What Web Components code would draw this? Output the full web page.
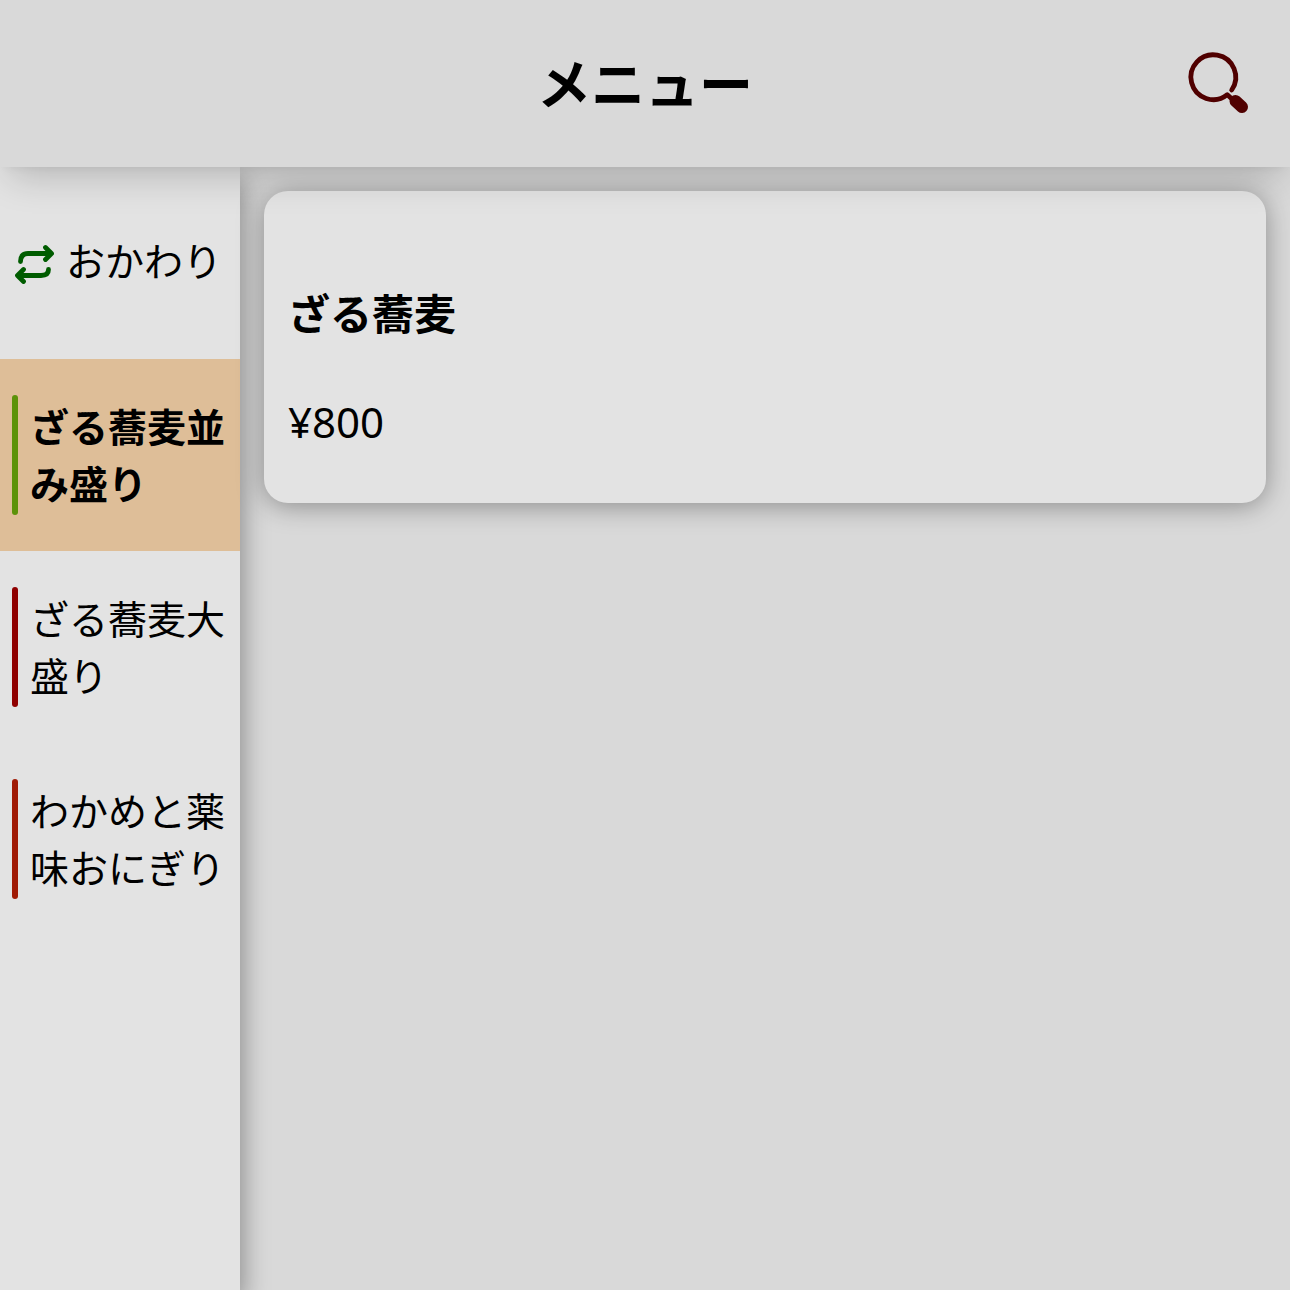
<!DOCTYPE html>
<html lang="ja">
<head>
<meta charset="utf-8">
<meta name="viewport" content="width=device-width, initial-scale=1">
<title>メニュー</title>
<style>
  html, body { height: 100%; margin: 0; }
  body {
    font-family: "Noto Sans", "Noto Sans CJK JP", sans-serif;
    color: #000;
    background: #d9d9d9;
  }
</style>
</head>
<body>
<menu-page>
  <menu-header slot="header">メニュー</menu-header>

  <menu-repeat slot="nav">おかわり</menu-repeat>
  <menu-item slot="nav" selected style="--bar:#5c920a">ざる蕎麦並み盛り</menu-item>
  <menu-item slot="nav" style="--bar:#8f0000">ざる蕎麦大盛り</menu-item>
  <menu-item slot="nav" style="--bar:#a01a05">わかめと薬味おにぎり</menu-item>

  <menu-card price="¥800">ざる蕎麦</menu-card>
</menu-page>

<script>
(function () {
  /* shadow root を作る共通処理 */
  function define(name, html) {
    customElements.define(name, class extends HTMLElement {
      connectedCallback() {
        if (this.shadowRoot) return;
        this.attachShadow({ mode: 'open' }).innerHTML = html(this);
      }
    });
  }

  /* ── ページの枠: 上にヘッダー、左にナビ、右に商品一覧 ── */
  define('menu-page', () => `
    <style>
      :host { display: flex; flex-direction: column; min-height: 100%; overflow: hidden; }
      .body { flex: 1; display: flex; }
      nav {
        flex: none;
        width: 240px;
        background: #e3e3e3;
        box-shadow: 3px 12px 24px rgba(0,0,0,.36);
      }
      main { flex: 1; min-width: 0; padding: 24px; }
    </style>
    <slot name="header"></slot>
    <div class="body">
      <nav aria-label="メニュー"><slot name="nav"></slot></nav>
      <main><slot></slot></main>
    </div>`);

  /* ── ヘッダー: 左右同幅の列でタイトルを中央に置く ── */
  define('menu-header', () => `
    <style>
      :host {
        position: relative;   /* 影を下の列より手前に出す */
        z-index: 2;
        display: grid;
        grid-template-columns: 1fr auto 1fr;
        align-items: center;
        height: 167px;
        padding: 0 36px;
        background: #d9d9d9;
        box-shadow: 0 18px 36px -9px rgba(0,0,0,.2), 0 6px 9px -6px rgba(0,0,0,.06);
      }
      h1 { grid-column: 2; margin: 0; font-size: 54px; line-height: 78px; font-weight: 700; }
      button {
        justify-self: end;
        display: block;
        padding: 0;
        border: 0;
        background: none;
        color: #500000;
      }
      svg { display: block; width: 72px; height: 72px; }
    </style>
    <h1><slot></slot></h1>
    <button type="button" aria-label="検索">
      <svg viewBox="0 0 72 72" fill="none" stroke="currentColor" stroke-linecap="round" stroke-linejoin="round">
        <path stroke-width="4.8" d="M49.7 42A22.4 22.4 0 1 0 45.3 46.7L50 51"/>
        <path stroke-width="12" d="M53.5 53L60 59"/>
      </svg>
    </button>`);

  /* ── ナビ: おかわり ── */
  define('menu-repeat', () => `
    <style>
      :host { display: block; }
      button {
        display: flex;
        align-items: center;
        gap: 12px;
        width: 100%;
        height: 192px;
        padding: 0 12px;
        border: 0;
        background: none;
        color: inherit;
        font: inherit;
        font-size: 39px;
        line-height: 57px;
        white-space: nowrap;
      }
      svg { flex: none; width: 42px; height: 42px; color: #005c00; }
      span { padding-bottom: 6px; }
    </style>
    <button type="button">
      <svg viewBox="0 0 42 42" fill="none" stroke="currentColor" stroke-width="4.8" stroke-linecap="round" stroke-linejoin="round">
        <path d="M8.5 19.5C8.5 14 11 11.500 16 11.500H39M33.500 5.500L39.500 11.500L33.500 17.500"/>
        <path d="M36.500 27.500C36.500 31.500 34 33.500 29 33.500H6M11.500 27.500L5.500 33.500L11.500 39.500"/>
      </svg>
      <span><slot></slot></span>
    </button>`);

  /* ── ナビ: カテゴリ（左の色帯は --bar） ── */
  define('menu-item', () => `
    <style>
      :host { display: block; }
      :host([selected]) { background: #debe98; font-weight: 700; }
      button {
        display: flex;
        align-items: center;
        gap: 12px;
        width: 100%;
        padding: 36px 12px;
        border: 0;
        background: none;
        color: inherit;
        font: inherit;
        font-size: 39px;
        line-height: 57px;
        text-align: left;
      }
      button::before {
        content: "";
        flex: none;
        width: 6px;
        height: 120px;
        border-radius: 3px;
        background: var(--bar);
      }
    </style>
    <button type="button"><span><slot></slot></span></button>`);

  /* ── 商品カード ── */
  define('menu-card', (el) => `
    <style>
      :host {
        position: relative;
        display: block;
        padding: 93px 24px 51px;
        border-radius: 24px;
        background: #e3e3e3;
        box-shadow: 0 3px 27px rgba(0,0,0,.36);
      }
      h2, p { margin: 0; font-size: 42px; line-height: 60px; }
      h2 { font-weight: 700; }
      p { margin-top: 48px; }
    </style>
    <h2><slot></slot></h2>
    <p>${el.getAttribute('price')}</p>`);
})();
</script>
</body>
</html>
